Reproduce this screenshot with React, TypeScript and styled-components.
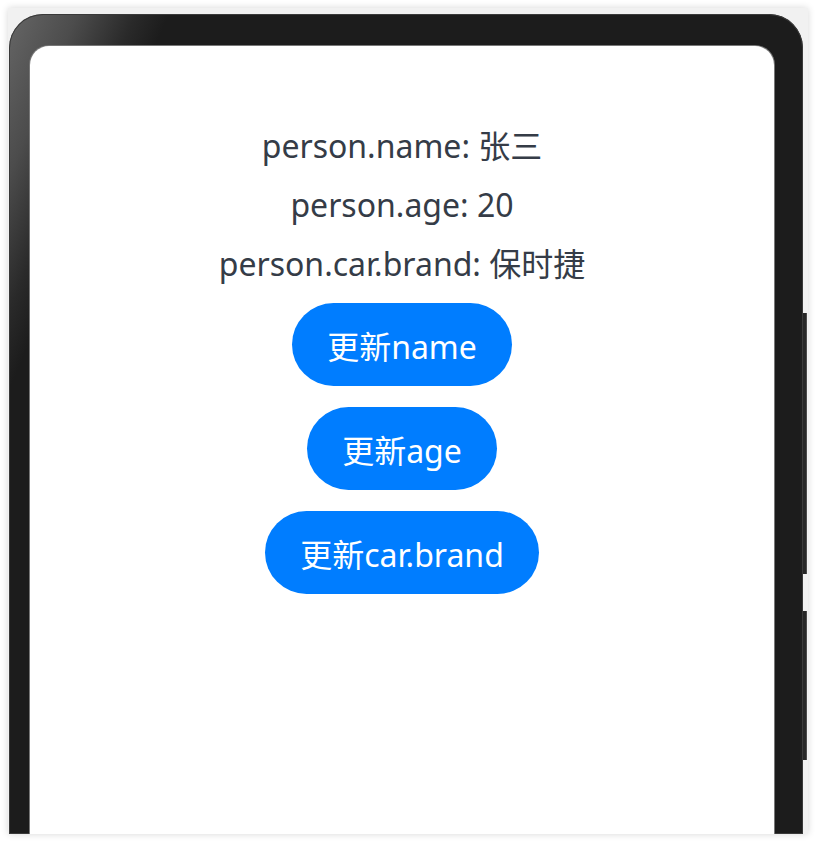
import React, { useState } from "react";
import styled, { createGlobalStyle } from "styled-components";

const GlobalStyle = createGlobalStyle`
  html, body {
    margin: 0;
    padding: 0;
    background: #ffffff;
  }
  body {
    font-family: "Noto Sans", "Noto Sans CJK SC", sans-serif;
  }
`;

const Stage = styled.div`
  padding: 8px 8px 0 8px;
  height: 844px;
  box-sizing: border-box;
  overflow: hidden;
`;

const Panel = styled.div`
  width: 800px;
  height: 826px;
  background: #f1f1f1;
  box-shadow: 0 0 7px rgba(0, 0, 0, 0.16);
  display: flex;
  align-items: flex-start;
  padding: 6px 0 0 1px;
  box-sizing: border-box;
  overflow: hidden;
`;

const Frame = styled.div`
  width: 794px;
  height: 820px;
  box-sizing: border-box;
  padding: 32px 29px 0 21px;
  border-radius: 34px 34px 0 0;
  background: linear-gradient(113deg, #666666 0%, #4c4c4c 6%, #2a2a2a 11%, #1c1c1c 14%, #1c1c1c 100%);
  box-shadow: inset 0 0 0 1px #3a3a3a;
  display: flex;
`;

const Screen = styled.div`
  flex: 1;
  background: #ffffff;
  border-radius: 19px 19px 0 0;
  box-shadow: 0 0 0 1px #777777;
  display: flex;
  flex-direction: column;
  align-items: center;
  padding-top: 70px;
`;

const SideKeys = styled.div`
  display: flex;
  flex-direction: column;
  gap: 37px;
  padding-top: 299px;
`;

const SideKey = styled.div<{ $h: number }>`
  width: 4px;
  height: ${(p) => p.$h}px;
  background: #262626;
  border-right: 1px solid #4a4a4a;
  box-sizing: border-box;
`;

const Line = styled.div`
  font-size: 32px;
  line-height: 59px;
  color: #353c47;
  white-space: nowrap;
`;

const Buttons = styled.div`
  display: flex;
  flex-direction: column;
  align-items: center;
  gap: 21px;
  margin-top: 10px;
`;

const ActionButton = styled.button`
  height: 83px;
  padding: 0 35px;
  border: none;
  border-radius: 42px;
  background: #007dff;
  color: #ffffff;
  font-family: "Noto Sans", "Noto Sans CJK SC", sans-serif;
  font-size: 32px;
  display: flex;
  align-items: center;
  justify-content: center;
  cursor: pointer;
  white-space: nowrap;
`;

export default function App() {
  const [person, setPerson] = useState({
    name: "张三",
    age: 20,
    car: { brand: "保时捷" },
  });

  return (
    <>
      <GlobalStyle />
      <Stage>
        <Panel>
          <Frame>
            <Screen>
              <Line>person.name: {person.name}</Line>
              <Line>person.age: {person.age}</Line>
              <Line>person.car.brand: {person.car.brand}</Line>
              <Buttons>
                <ActionButton onClick={() => setPerson({ ...person, name: person.name + "~" })}>
                  更新name
                </ActionButton>
                <ActionButton onClick={() => setPerson({ ...person, age: person.age + 1 })}>
                  更新age
                </ActionButton>
                <ActionButton
                  onClick={() => setPerson({ ...person, car: { brand: person.car.brand + "!" } })}
                >
                  更新car.brand
                </ActionButton>
              </Buttons>
            </Screen>
          </Frame>
          <SideKeys>
            <SideKey $h={261} />
            <SideKey $h={149} />
          </SideKeys>
        </Panel>
      </Stage>
    </>
  );
}
